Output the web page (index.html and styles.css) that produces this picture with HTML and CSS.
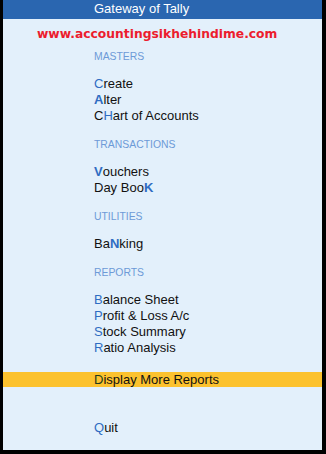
FILE: index.html
```html
<!DOCTYPE html>
<html>
<head>
<meta charset="utf-8">
<link rel="stylesheet" href="styles.css">
</head>
<body>
<div class="frame">
  <div class="title">Gateway of Tally</div>
  <div class="site">www.accountingsikhehindime.com</div>
  <div class="menu">
    <div class="section">
      <div class="head">MASTERS</div>
      <div class="item"><span class="hk">C</span>reate</div>
      <div class="item"><span class="hk b">A</span>lter</div>
      <div class="item">C<span class="hk">H</span>art of Accounts</div>
    </div>
    <div class="section">
      <div class="head">TRANSACTIONS</div>
      <div class="item"><span class="hk b">V</span>ouchers</div>
      <div class="item">Day Boo<span class="hk b">K</span></div>
    </div>
    <div class="section">
      <div class="head">UTILITIES</div>
      <div class="item">Ba<span class="hk b">N</span>king</div>
    </div>
    <div class="section">
      <div class="head">REPORTS</div>
      <div class="item"><span class="hk">B</span>alance Sheet</div>
      <div class="item"><span class="hk">P</span>rofit &amp; Loss A/c</div>
      <div class="item"><span class="hk">S</span>tock Summary</div>
      <div class="item"><span class="hk">R</span>atio Analysis</div>
    </div>
  </div>
  <div class="bar"><span class="dk">D</span>isplay More Reports</div>
  <div class="quit"><span class="hk">Q</span>uit</div>
</div>
</body>
</html>
```
FILE: styles.css
```css
html, body {
  margin: 0;
  padding: 0;
  background: #000;
}
body {
  width: 326px;
  height: 454px;
  overflow: hidden;
  font-family: Arial, "Liberation Sans", sans-serif;
}
.frame {
  box-sizing: border-box;
  width: 326px;
  height: 454px;
  border-left: 3px solid #000;
  border-right: 4px solid #000;
  border-bottom: 4px solid #000;
  background: #e3f0fb;
  display: flex;
  flex-direction: column;
}
.title {
  height: 19px;
  line-height: 18px;
  background: #2a66b0;
  color: #fff;
  font-size: 13px;
  padding-left: 91px;
}
.site {
  margin-top: 7px;
  padding-left: 34px;
  line-height: 16px;
  font-family: "DejaVu Sans", sans-serif;
  font-weight: bold;
  font-size: 12.3px;
  color: #ec1c2e;
}
.menu {
  margin-top: 7px;
  padding-left: 91px;
  display: flex;
  flex-direction: column;
  gap: 13px;
}
.head {
  font-size: 10.4px;
  line-height: 16px;
  color: #6d9ad7;
  margin-bottom: 11px;
}
.item {
  font-size: 13px;
  line-height: 16px;
  color: #111;
}
.hk {
  color: #2f6cc2;
}
.hk.b {
  font-weight: bold;
}
.bar {
  margin-top: 16px;
  height: 15px;
  line-height: 15px;
  background: #fcc22e;
  font-size: 13px;
  color: #111;
  padding-left: 91px;
}
.dk {
  color: #1d3b1d;
}
.quit {
  margin-top: 33px;
  padding-left: 91px;
  font-size: 13px;
  line-height: 16px;
  color: #111;
}
```
